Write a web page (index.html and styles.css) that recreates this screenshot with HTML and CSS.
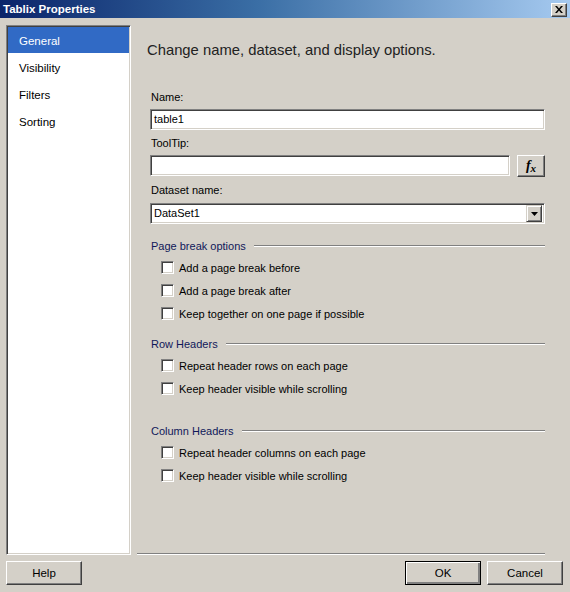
FILE: index.html
```html
<!DOCTYPE html>
<html lang="en">
<head>
    <meta charset="UTF-8">
    <title>Tablix Properties</title>
    <link rel="stylesheet" href="styles.css">
</head>
<body>
    <div class="dialog">
        <div class="titlebar">
            <span class="title">Tablix Properties</span>
            <span class="close-btn">
                <svg width="8" height="7" viewBox="0 0 8 7">
                    <path d="M0 0h2l2 2.5L6 0h2L5 3.5 8 7H6L4 4.5 2 7H0l3-3.5z" fill="#000"/>
                </svg>
            </span>
        </div>

        <div class="main">
            <ul class="nav">
                <li class="nav-item active">General</li>
                <li class="nav-item">Visibility</li>
                <li class="nav-item">Filters</li>
                <li class="nav-item">Sorting</li>
            </ul>

            <div class="pane">
                <h1 class="heading">Change name, dataset, and display options.</h1>

                <div class="form">
                    <label class="label first">Name:</label>
                    <div class="textbox">table1</div>

                    <label class="label">ToolTip:</label>
                    <div class="field-row">
                        <div class="textbox grow"></div>
                        <span class="btn fx-btn"><i>f</i><i class="x">x</i></span>
                    </div>

                    <label class="label">Dataset name:</label>
                    <div class="textbox select">
                        <span>DataSet1</span>
                        <span class="drop-btn">
                            <svg width="7" height="4" viewBox="0 0 7 4"><path d="M0 0h7L3.5 4z" fill="#000"/></svg>
                        </span>
                    </div>

                    <div class="group-title gap-small">Page break options</div>
                    <div class="check-row"><span class="checkbox"></span>Add a page break before</div>
                    <div class="check-row"><span class="checkbox"></span>Add a page break after</div>
                    <div class="check-row"><span class="checkbox"></span>Keep together on one page if possible</div>

                    <div class="group-title">Row Headers</div>
                    <div class="check-row"><span class="checkbox"></span>Repeat header rows on each page</div>
                    <div class="check-row"><span class="checkbox"></span>Keep header visible while scrolling</div>

                    <div class="group-title gap-large">Column Headers</div>
                    <div class="check-row"><span class="checkbox"></span>Repeat header columns on each page</div>
                    <div class="check-row"><span class="checkbox"></span>Keep header visible while scrolling</div>
                </div>
            </div>
        </div>

        <div class="footer">
            <span class="btn">Help</span>
            <span class="spacer"></span>
            <span class="btn default">OK</span>
            <span class="btn">Cancel</span>
        </div>
    </div>
</body>
</html>
```

FILE: styles.css
```css
body {
    margin: 0;
    font-family: "Liberation Sans", sans-serif;
    font-size: 11px;
    color: #000;
    background-color: #d4d0c8;
}
.dialog {
    width: 570px;
    height: 592px;
    background-color: #d4d0c8;
    display: flex;
    flex-direction: column;
}
.titlebar {
    height: 18px;
    background: linear-gradient(to right, #0a246a, #3a6ea5 45%, #a6caf0);
    display: flex;
    align-items: center;
    justify-content: space-between;
    padding: 0 3px 0 3px;
}
.title {
    color: #fff;
    font-weight: bold;
    font-size: 11.5px;
}
.close-btn {
    width: 16px;
    height: 14px;
    box-sizing: border-box;
    background-color: #d4d0c8;
    border-top: 1px solid #fff;
    border-left: 1px solid #fff;
    border-right: 1px solid #404040;
    border-bottom: 1px solid #404040;
    box-shadow: inset -1px -1px 0 #808080;
    display: flex;
    align-items: center;
    justify-content: center;
    margin-top: 1px;
}

.main {
    display: flex;
    padding: 7px 0 0 6px;
    height: 530px;
}
.nav {
    list-style: none;
    margin: 0;
    padding: 1px;
    width: 125px;
    height: 530px;
    box-sizing: border-box;
    background-color: #fff;
    border-top: 1px solid #808080;
    border-left: 1px solid #808080;
    border-right: 1px solid #fff;
    border-bottom: 1px solid #fff;
    box-shadow: inset 1px 1px 0 #404040, inset -1px -1px 0 #d4d0c8;
    font-size: 11.5px;
}
.nav-item {
    height: 27px;
    line-height: 29px;
    padding-left: 11px;
}
.nav-item.active {
    background-color: #316ac5;
    color: #fff;
    height: 26px;
    line-height: 29px;
}
.nav-item.active + .nav-item {
    height: 28px;
    line-height: 30px;
}

.pane {
    margin-left: 6px;
    width: 408px;
    height: 530px;
    box-sizing: border-box;
    border-bottom: 1px solid #fff;
    box-shadow: inset 0 -1px 0 #808080;
}
.heading {
    margin: 15px 0 0 0;
    padding-left: 10px;
    font-weight: normal;
    font-size: 14.8px;
    line-height: 20px;
    color: #222;
}
.form {
    padding-left: 13px;
    display: flex;
    flex-direction: column;
}
.label {
    display: block;
    line-height: 14px;
    margin-top: 6px;
    padding-left: 1px;
}
.label.first {
    margin-top: 30px;
}
.textbox {
    margin-top: 5px;
    height: 21px;
    box-sizing: border-box;
    background-color: #fff;
    border-top: 1px solid #808080;
    border-left: 1px solid #808080;
    border-right: 1px solid #fff;
    border-bottom: 1px solid #fff;
    box-shadow: inset 1px 1px 0 #404040, inset -1px -1px 0 #d4d0c8;
    padding: 0 3px;
    line-height: 19px;
}
.field-row {
    display: flex;
    margin-top: 5px;
}
.field-row .textbox {
    margin-top: 0;
}
.grow {
    flex: 1;
}
.select {
    margin-top: 6px;
    display: flex;
    justify-content: space-between;
    padding-right: 2px;
}
.drop-btn {
    width: 16px;
    height: 17px;
    margin-top: 1px;
    box-sizing: border-box;
    background-color: #d4d0c8;
    border-top: 1px solid #d4d0c8;
    border-left: 1px solid #d4d0c8;
    border-right: 1px solid #404040;
    border-bottom: 1px solid #404040;
    box-shadow: inset 1px 1px 0 #fff, inset -1px -1px 0 #808080;
    display: flex;
    align-items: center;
    justify-content: center;
}

.btn {
    height: 24px;
    width: 76px;
    box-sizing: border-box;
    background-color: #d4d0c8;
    border-top: 1px solid #fff;
    border-left: 1px solid #fff;
    border-right: 1px solid #404040;
    border-bottom: 1px solid #404040;
    box-shadow: inset -1px -1px 0 #808080;
    display: flex;
    align-items: center;
    justify-content: center;
    font-size: 11.5px;
}
.btn.default {
    border: 1px solid #000;
    box-shadow: inset 1px 1px 0 #fff, inset -2px -2px 0 #808080, inset -1px -1px 0 #404040;
}
.fx-btn {
    width: 28px;
    height: 22px;
    margin-left: 7px;
    font-family: "Liberation Serif", serif;
    font-weight: bold;
    font-size: 14px;
}
.fx-btn .x {
    font-size: 11px;
    margin-top: 3px;
}

.group-title {
    display: flex;
    align-items: center;
    line-height: 14px;
    margin-top: 12px;
    padding-left: 1px;
    color: #10185a;
}
.group-title::after {
    content: "";
    flex: 1;
    margin-left: 8px;
    border-top: 1px solid #808080;
    border-bottom: 1px solid #fff;
}
.group-title.gap-small {
    margin-top: 15px;
}
.group-title.gap-large {
    margin-top: 24px;
}
.check-row {
    display: flex;
    align-items: center;
    height: 23px;
    padding-left: 11px;
}
.group-title + .check-row {
    margin-top: 3px;
}
.checkbox {
    width: 13px;
    height: 13px;
    box-sizing: border-box;
    margin-right: 5px;
    background-color: #fff;
    border-top: 1px solid #808080;
    border-left: 1px solid #808080;
    border-right: 1px solid #fff;
    border-bottom: 1px solid #fff;
    box-shadow: inset 1px 1px 0 #404040, inset -1px -1px 0 #d4d0c8;
}

.footer {
    display: flex;
    padding: 6px 7px 0 6px;
    gap: 6px;
}
.spacer {
    flex: 1;
}
```
